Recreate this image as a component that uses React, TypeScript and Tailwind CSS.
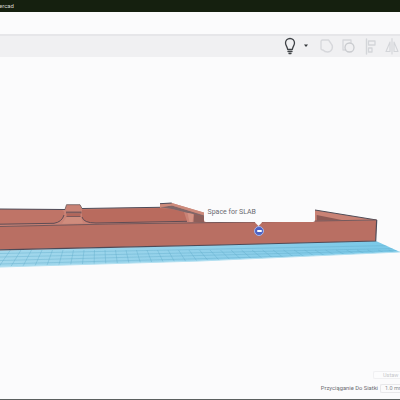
export default function App() {
  const gridV: string[] = [];
  for (let i = -6; i < 40; i++) {
    const xTop = i * 10.5;
    const xBot = i * 12 - 14;
    gridV.push(`M${xTop} 250L${xBot} 268`);
  }
  const gridFill = "M0 250.500L376 241L400 252L200 261L0 267Z";
  return (
    <div className="w-[400px] h-[400px] flex flex-col bg-[#fbfbfc] overflow-hidden" style={{ fontFamily: 'Roboto, "Liberation Sans", sans-serif' }}>
      <div className="h-[12px] bg-[#15200f] flex items-center shrink-0">
        <span className="text-[6px] leading-none text-[#d5d8d2] -ml-[1px]">ercad</span>
      </div>
      <div className="h-[22px] bg-[#fbfbfc] shrink-0" />
      <div className="h-[23px] bg-[#f0f0f2] border-t-2 border-[#e6e6e9] flex items-center justify-end shrink-0">
        <svg width="120" height="21" viewBox="0 0 120 21" className="shrink-0">
          <g fill="none" strokeLinejoin="round" strokeLinecap="round">
            <path d="M5.500 7a4.500 4.500 0 1 1 9 0c0 2.500-1.800 3.500-2.200 6.500h-4.600c-.4-3-2.200-4-2.200-6.500z" stroke="#3f4246" strokeWidth="1.300" />
            <path d="M8 15.500h4M9 17.500h2" stroke="#3f4246" strokeWidth="1.300" />
            <path d="M24 8.500h4l-2 2.500z" fill="#33363a" />
            <path d="M42.500 4h6l2.500 3.500a5 5 0 0 1-3.500 8.500c-2 0-3.500-.8-4.500-2H42a1.500 1.500 0 0 1-1-1.500V5.500A1.500 1.500 0 0 1 42.500 4z" stroke="#d6d7db" strokeWidth="1.300" />
            <path d="M63 4h8v3M63 4v10h3" stroke="#d6d7db" strokeWidth="1.300" />
            <circle cx="69.500" cy="11.500" r="4.500" stroke="#c9cbcf" strokeWidth="1.300" />
            <path d="M86.500 3v15" stroke="#d3d5d9" strokeWidth="1.400" />
            <path d="M88.500 5h6.500v4h-6.500zM88.500 12h3.500v4h-3.500z" stroke="#d3d5d9" strokeWidth="1.300" />
            <path d="M112 2.500v15.500M110 15.500h-4l4-9.500zM114 6l4 9.500h-4z" stroke="#d3d5d9" strokeWidth="1.100" />
          </g>
        </svg>
      </div>
      <div className="relative flex-1 bg-[#fbfbfc]">
        <svg width="400" height="343" viewBox="0 57 400 343" className="absolute inset-0">
          <defs>
            <clipPath id="g"><path d={gridFill} /></clipPath>
            <linearGradient id="gf" x1="0" y1="0" x2="1" y2="0">
              <stop offset="0" stopColor="#a3d8ec" />
              <stop offset="0.55" stopColor="#90d0ea" />
              <stop offset="1" stopColor="#78c8e8" />
            </linearGradient>
          </defs>
          <path d={gridFill} fill="url(#gf)" />
          <g clipPath="url(#g)">
            <path d={gridV.join("")} stroke="#5fabcb" strokeWidth="0.400" fill="none" />
            <path d="M0 253.500L392 245.500M0 257L396 248.500M0 260.500L398 250.500M0 264L300 256" stroke="#5fabcb" strokeWidth="0.400" fill="none" />
          </g>
          <path d="M400 252L200 261L0 267" stroke="#b4e0f1" strokeWidth="1" fill="none" />

          {/* top rim, floor and rear of the far end */}
          <path d="M0 209L65 209.500L66.500 204.700L80 204.700L82 208.500L160 207.300L160 203.700L171.700 203L205 213L315 210L376.700 220L200 224L0 227Z" fill="#c98275" />

          {/* left pocket */}
          <path d="M0 209.300L60 209.500Q65 210 64 215Q62 222 54 223.300L0 224.200Z" fill="#bf7467" />
          <path d="M0 224.200L54 223.300Q62 222 64 215" stroke="#5f4c54" strokeWidth="1" fill="none" />

          {/* right pocket */}
          <path d="M82 209.500L160 208L172 209L184 212L187 221.300L96 223Q83.500 223 82 217Z" fill="#b96b5e" />
          <path d="M82 217Q83.500 223 96 223L187 221.300" stroke="#5f4c54" strokeWidth="1" fill="none" />

          {/* centre post */}
          <path d="M66 211.500H81.500V213.500H66Z" fill="#7d5a5c" />
          <path d="M66.500 213.500H80.500V216.500H66.500Z" fill="#b3665b" />
          <path d="M66.500 216.500H80.500" stroke="#6b5157" strokeWidth="0.800" />
          <path d="M66.500 217L81 217L83 223.200L62 223.800Z" fill="#cf8c7d" />

          {/* raised far piece */}
          <path d="M160 207.300L172 205.500L204 215.500L204 217L192 214L172 209Z" fill="#7f6668" />
          <path d="M160 203.700L171.700 203L204 212.500L204 215L172 205.500L160 207.300Z" fill="#cc8a7b" />
          <path d="M187.500 213L193.500 214L192.500 222L189.500 222Z" fill="#d49384" />
          <path d="M194 214L204 216.500V222H193.500Z" fill="#8f5f5a" />

          {/* far right pocket */}
          <path d="M316.700 215L341.700 220L316.700 220.500Z" fill="#8d5a55" />
          <path d="M315 210L376.700 220" stroke="#4f4d58" strokeWidth="1" fill="none" />

          {/* rear edges */}
          <path d="M0 209L65 209.500M82 208.500L160 207.300M160 203.700L171.700 203" stroke="#4d4b58" strokeWidth="1" fill="none" />
          <path d="M65 209.500L66.500 204.700L80 204.700L82 208.500" stroke="#6a5a5c" strokeWidth="0.800" fill="none" />

          {/* front face */}
          <path d="M0 226.500L110 224L220 222.500L376.700 220L375.700 241L220 245L110 247.300L0 249.800Z" fill="#b96f63" />
          <path d="M0 226.500L110 224L220 222.500L376.700 220" stroke="#6b5358" strokeWidth="0.900" fill="none" />
          <path d="M376.700 220L375.700 241L220 245L110 247.300L0 249.800" stroke="#4d4b58" strokeWidth="1.200" fill="none" />
        </svg>

        {/* tooltip */}
        <div className="absolute left-[204px] top-[147px] w-[111px] h-[18px] bg-[#fbfbfc] rounded-[2px] flex items-center pl-[3.500px] pb-[2px]">
          <span className="text-[7px] leading-none text-[#6a6a70]">Space for SLAB</span>
          <div className="absolute left-[52px] top-[15.500px] w-[5px] h-[5px] rotate-45 bg-[#fbfbfc]" />
        </div>
        <div className="absolute left-[254px] top-[168.500px] w-[10px] h-[10px] rounded-full bg-[#4f63c4] border border-[#a9b8ea] flex items-center justify-center">
          <div className="w-[5px] h-[2px] bg-white rounded-[1px]" />
        </div>

        {/* bottom right */}
        <div className="absolute right-0 top-[314px] w-[27px] h-[8px] border border-[#f0f0f2] border-r-0 rounded-l-[2px] bg-[#fcfcfd] pl-[9px] text-[5.500px] leading-[6px] text-[#c5c6ca] overflow-hidden whitespace-nowrap">Ustaw</div>
        <div className="absolute right-0 top-[327px] flex items-center gap-[2px]">
          <span className="text-[5.800px] leading-none text-[#6c6d72] whitespace-nowrap">Przyciąganie Do Siatki</span>
          <div className="w-[20px] h-[9px] border border-[#e8e8ea] border-r-0 rounded-l-[2px] pl-[4px] text-[5.500px] leading-[7px] text-[#8a8b90] overflow-hidden whitespace-nowrap">1.0 mm</div>
        </div>
        <div className="absolute left-0 right-0 bottom-0 h-[1px] bg-[#5b5f5f]" />
      </div>
    </div>
  );
}
